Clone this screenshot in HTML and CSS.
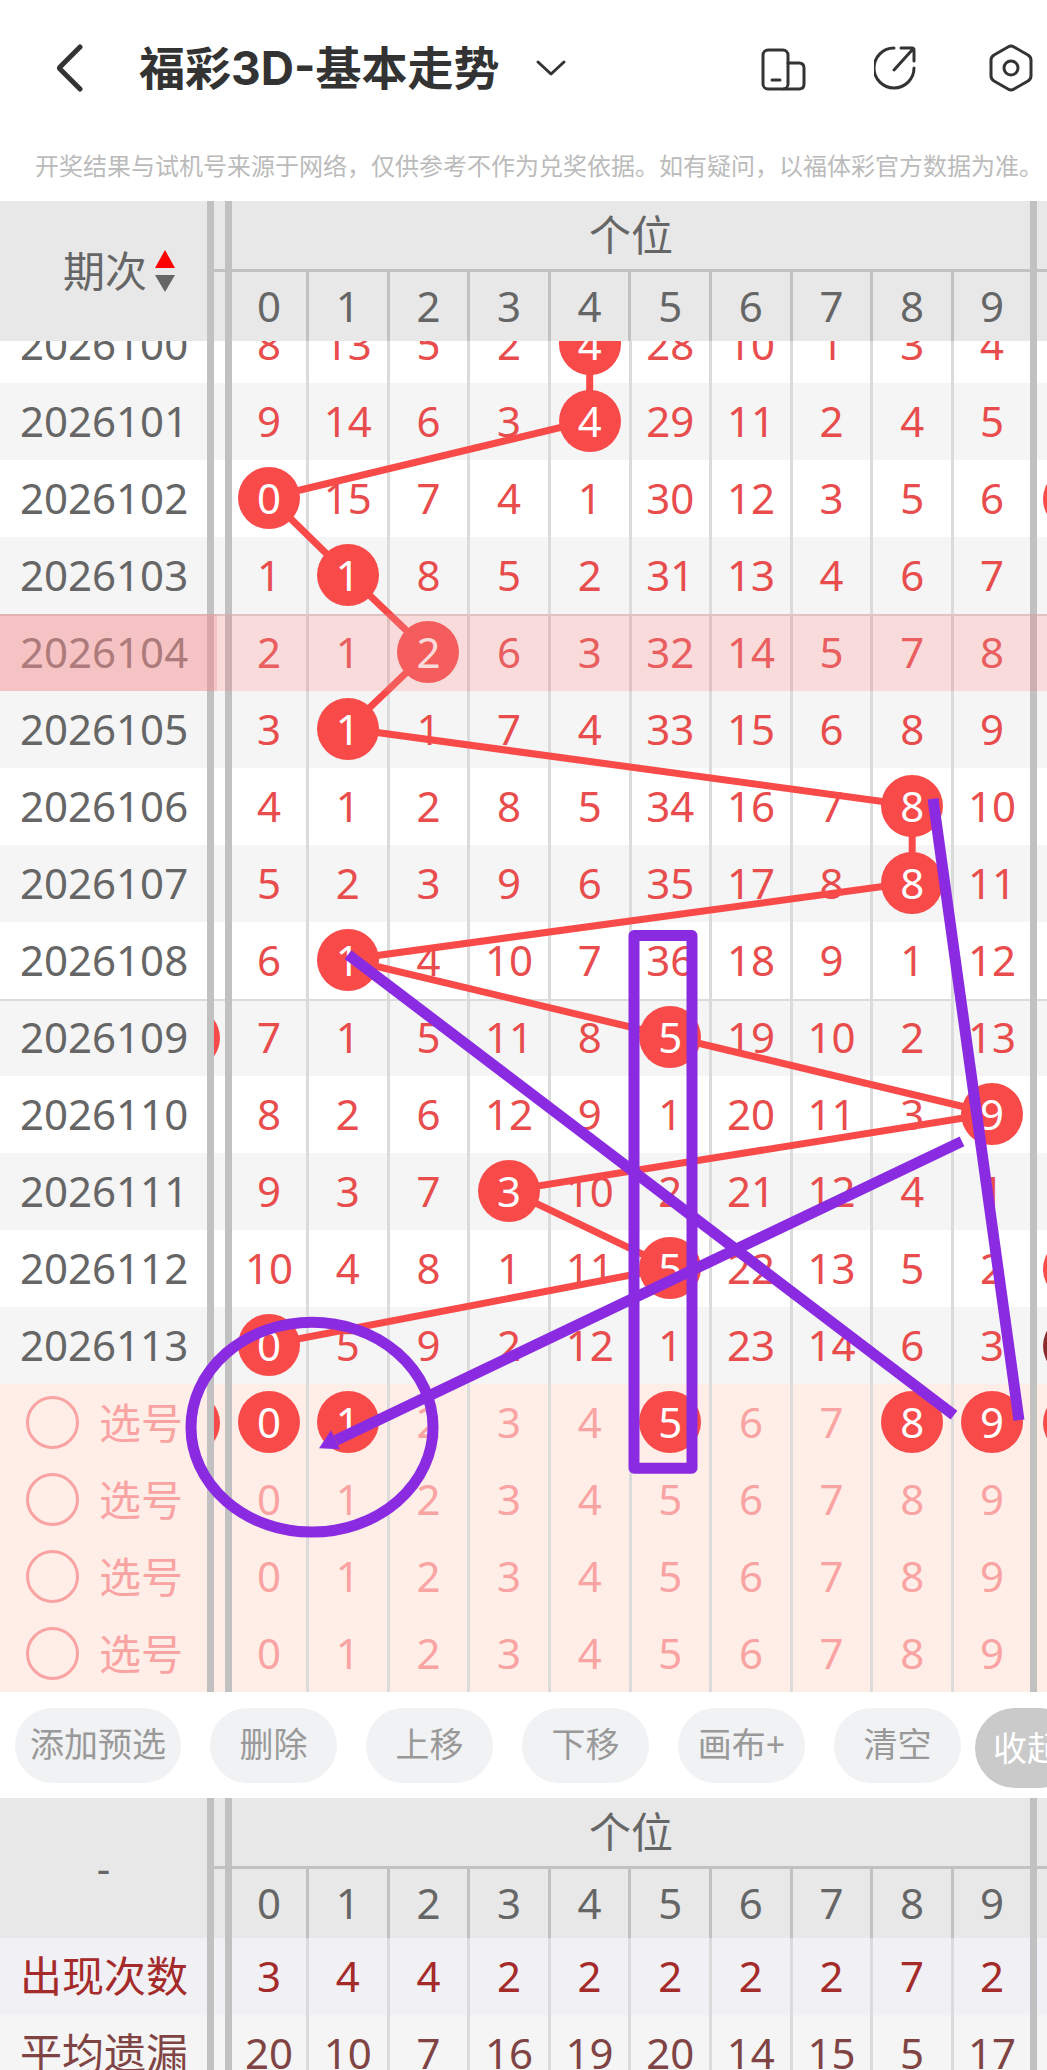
FILE: index.html
```html
<!DOCTYPE html>
<html lang="zh-CN">
<head>
    <meta charset="UTF-8">
    <meta name="viewport" content="width=device-width, initial-scale=1.0">
    <title>福彩3D-基本走势</title>
    <link rel="stylesheet" href="styles.css">
</head>
<body>
    <header class="topbar">
        <a class="back" href="#" aria-label="返回">
            <svg width="28" height="50" viewBox="0 0 28 50"><path d="M25 4 5 24Q4 25 5 26L25 46"/></svg>
        </a>
        <h1 class="title">福彩3D-基本走势</h1>
        <button class="icon-btn drop" type="button" aria-label="切换走势">
            <svg width="32" height="18" viewBox="0 0 32 18"><path d="M3 3 16 15 29 3"/></svg>
        </button>
        <div class="tools">
            <button class="icon-btn" type="button" aria-label="横竖屏">
                <svg width="46" height="46" viewBox="0 0 46 46"><rect x="3" y="5" width="25" height="39" rx="5"/><path d="M28 18H39Q44 18 44 23V39Q44 44 39 44H24M12 35H20"/></svg>
            </button>
            <button class="icon-btn" type="button" aria-label="分享">
                <svg width="46" height="46" viewBox="2 2 46 46"><path d="M22 5A20 20 0 1 0 42 25M22 27 41 6M29 5H40Q42 5 42 7V18"/></svg>
            </button>
            <button class="icon-btn" type="button" aria-label="设置">
                <svg width="46" height="48" viewBox="0 0 46 48"><path d="M20 3Q23 1 26 3L40 11Q43 13 43 16V32Q43 35 40 37L26 45Q23 47 20 45L6 37Q3 35 3 32V16Q3 13 6 11Z"/><circle cx="23" cy="24" r="7"/></svg>
            </button>
        </div>
    </header>
    <p class="notice">开奖结果与试机号来源于网络，仅供参考不作为兑奖依据。如有疑问，以福体彩官方数据为准。</p>

    <table class="grid head" id="head-table">
        <colgroup></colgroup>
        <thead>
            <tr>
                <th class="issue" rowspan="2">
                    <button class="sort" type="button">期次
                        <svg width="20" height="42" viewBox="0 0 20 42"><path class="up" d="M0 18 10 0 20 18Z"/><path class="down" d="M0 25H20L10 42Z"/></svg>
                    </button>
                </th>
                <th class="gap"></th>
                <th class="group" colspan="10">个位</th>
                <th class="more"></th>
            </tr>
            <tr class="digits"></tr>
        </thead>
    </table>

    <div class="chart" id="chart">
        <table class="grid body">
            <colgroup></colgroup>
            <tbody id="draws"></tbody>
            <tbody id="picks" class="picks"></tbody>
        </table>
        <svg class="trend"><polyline id="trend-line"/></svg>
        <svg class="canvas" viewBox="0 0 1047 1352" preserveAspectRatio="none">
            <rect x="634" y="595" width="58" height="533"/>
            <path d="M348 614 954 1075M933 458 1019 1080M962 801 336 1100"/>
            <path class="arrow" d="M319 1108 331 1090 340 1109Z"/>
            <ellipse cx="312" cy="1087" rx="121" ry="105"/>
        </svg>
    </div>

    <div class="actions">
        <button type="button">添加预选</button>
        <button type="button">删除</button>
        <button type="button">上移</button>
        <button type="button">下移</button>
        <button type="button">画布+</button>
        <button type="button">清空</button>
        <button type="button" class="fold">收起</button>
    </div>

    <table class="grid stats">
        <colgroup></colgroup>
        <thead>
            <tr>
                <th class="issue" rowspan="2">-</th>
                <th class="gap"></th>
                <th class="group" colspan="10">个位</th>
                <th class="more"></th>
            </tr>
            <tr class="digits"></tr>
        </thead>
        <tbody id="stats"></tbody>
    </table>
    <script src="app.js"></script>
</body>
</html>
```

FILE: styles.css
```css
* {
    box-sizing: border-box;
}
body {
    margin: 0;
    height: 100vh;
    overflow: hidden;
    background-color: #fff;
    color: #666;
    font-family: "Noto Sans", "Noto Sans CJK SC", sans-serif;
    font-size: 42px;
}
button {
    border: none;
    padding: 0;
    background: none;
    color: inherit;
    font: inherit;
    cursor: pointer;
}
svg {
    display: block;
}

/* top bar */
.topbar {
    display: flex;
    align-items: center;
    height: 136px;
    padding: 0 13px 0 55px;
}
.topbar svg {
    fill: none;
    stroke: #333;
    stroke-width: 3;
    stroke-linecap: round;
    stroke-linejoin: round;
}
.topbar .back svg {
    stroke-width: 5;
}
.title {
    margin: 0 36px 0 56px;
    color: #333;
    font-family: Inter, "Noto Sans CJK SC", sans-serif;
    font-size: 46px;
    line-height: 60px;
    font-weight: bold;
    white-space: nowrap;
}
.tools {
    display: flex;
    align-items: center;
    gap: 68px;
    margin-left: auto;
}
.notice {
    margin: 0;
    height: 65px;
    padding-left: 35px;
    color: #bbb;
    font-size: 24px;
    line-height: 60px;
    white-space: nowrap;
}

/* tables */
.grid {
    width: 100%;
    table-layout: fixed;
    border-collapse: separate;
    border-spacing: 0;
}
.col-issue {
    width: 214px;
}
.col-gap {
    width: 18px;
}
.col-first {
    width: 77px;
}
.col-last {
    width: 83px;
}
.col-more {
    width: 10px;
}
.grid th,
.grid td {
    height: 77px;
    padding: 0 0 2px;
    border-right: 3px solid #dbdbdb;
    font-weight: normal;
    line-height: 60px;
    text-align: center;
    white-space: nowrap;
}
.grid .issue,
.grid .gap,
.grid .last,
.grid .group {
    border-right: 7px solid #c1c1c1;
}
.grid .more {
    border-right: none;
}
.grid tbody .issue {
    padding-left: 20px;
    text-align: left;
}
.grid thead th {
    height: 69px;
    background-color: #e8e8e8;
    border-right-color: #c1c1c1;
}
.grid thead tr:first-child th {
    height: 71px;
    padding: 0;
    border-bottom: 3px solid #c1c1c1;
}
.grid thead tr:first-child .issue {
    border-bottom: none;
}
.sort {
    display: flex;
    align-items: center;
    gap: 8px;
    margin-left: 63px;
}
.sort .up {
    fill: #f00;
}
.sort .down {
    fill: #666;
}

/* trend chart */
.chart {
    position: relative;
    overflow: hidden;
}
.body {
    margin-top: -35px;
}
#draws td {
    color: #e84c4c;
}
#draws tr:nth-child(even) {
    background-color: #f5f5f5;
}
#draws .divide th,
#draws .divide td {
    box-shadow: inset 0 2px #dbdbdb;
}
.selected {
    position: relative;
}
.selected .issue::before,
.selected .issue::after {
    content: "";
    position: absolute;
    z-index: 3;
    top: 0;
    bottom: 0;
}
.selected .issue::before {
    left: 0;
    width: 217px;
    background-color: rgba(236, 142, 142, 0.53);
}
.selected .issue::after {
    left: 217px;
    right: 0;
    background-color: rgba(236, 137, 137, 0.3);
}
.ball {
    position: relative;
    z-index: 2;
    display: block;
    width: 62px;
    height: 62px;
    margin: 0 auto;
    border-radius: 50%;
    background-color: #f94a4a;
    color: #fff;
    line-height: 62px;
}
.grid .gap,
.grid .more {
    position: relative;
    overflow: hidden;
}
.edge {
    position: absolute;
    top: 8px;
    width: 62px;
    height: 62px;
    border-radius: 50%;
    background-color: #f94a4a;
}
.gap .edge {
    right: 5px;
}
.more .edge {
    left: 6px;
}
.edge.dark {
    background-color: #8b2c2c;
}
.trend,
.canvas {
    position: absolute;
    top: 0;
    left: 0;
    width: 100%;
    height: 100%;
    fill: none;
    pointer-events: none;
}
.trend {
    z-index: 1;
    stroke: #f94a4a;
    stroke-width: 7;
}
.canvas {
    z-index: 4;
    stroke: #8a2be2;
    stroke-width: 11;
    stroke-linejoin: round;
}
.canvas .arrow {
    fill: #8a2be2;
    stroke: none;
}

/* pick rows */
.picks tr {
    background-color: #ffeee8;
    color: #f9a3a3;
}
.picks label {
    display: flex;
    align-items: center;
    gap: 20px;
    padding: 2px 0 0 6px;
}
.picks input {
    appearance: none;
    width: 53px;
    height: 53px;
    margin: 0;
    border: 3px solid #f9a3a3;
    border-radius: 50%;
}
.picks button {
    width: 62px;
    height: 62px;
}

/* action buttons */
.actions {
    display: flex;
    align-items: flex-start;
    gap: 29px;
    height: 106px;
    padding: 16px 0 0 15px;
    overflow: hidden;
}
.actions button {
    flex: none;
    min-width: 127px;
    height: 75px;
    padding: 0 15px 6px;
    border-radius: 38px;
    background-color: #f1f2f4;
    color: #999;
    font-size: 34px;
}
.actions .fold {
    min-width: 0;
    height: 80px;
    margin-left: -15px;
    padding: 0 18px 4px;
    border-radius: 40px;
    background-color: #cacaca;
    color: #fff;
}

/* statistics */
#stats tr {
    background-color: #f5f5f5;
    color: #804444;
}
#stats tr:first-child {
    background-color: #f0f0f5;
    color: #a52a2a;
}
```

FILE: app.js
```js
// winning digit of each issue, starting from 2026100
const firstIssue = 2026100;
const hits = [4, 4, 0, 1, 2, 1, 8, 8, 1, 5, 9, 3, 5, 0];
const misses = [7, 12, 4, 1, 0, 27, 9, 0, 2, 3];
const selectedIssue = 2026104;

// balls of the neighbouring columns that stick out at the edges
const leftEdge = { 2026109: '' };
const rightEdge = { 2026102: '', 2026112: '', 2026113: 'dark' };

const picks = [[0, 1, 5, 8, 9], [], [], []];
const stats = [
    ['出现次数', [3, 4, 4, 2, 2, 2, 2, 2, 7, 2]],
    ['平均遗漏', [20, 10, 7, 16, 19, 20, 14, 15, 5, 17]]
];

function edge(style) {
    return style === undefined ? '' : `<span class="edge ${style}"></span>`;
}

function row(cls, label, cells, left, right) {
    let html = `<tr class="${cls}"><th class="issue" scope="row">${label}</th><td class="gap">${edge(left)}</td>`;
    cells.forEach((cell, i) => {
        html += `<td class="${i === 9 ? 'last' : ''}">${cell}</td>`;
    });
    return html + `<td class="more">${edge(right)}</td></tr>`;
}

document.querySelectorAll('colgroup').forEach(group => {
    group.innerHTML = '<col class="col-issue"><col class="col-gap"><col class="col-first">' +
        '<col>'.repeat(8) + '<col class="col-last"><col class="col-more">';
});

document.querySelectorAll('.digits').forEach(tr => {
    let html = '<th class="gap"></th>';
    for (let i = 0; i < 10; i++) {
        html += `<th class="${i === 9 ? 'last' : ''}" scope="col">${i}</th>`;
    }
    tr.innerHTML = html + '<th class="more"></th>';
});

document.getElementById('draws').innerHTML = hits.map((hit, n) => {
    const issue = firstIssue + n;
    const cells = misses.map((miss, i) => {
        misses[i] = i === hit ? 0 : miss + 1;
        return i === hit ? `<span class="ball">${i}</span>` : misses[i];
    });
    let cls = issue % 5 === 4 ? 'divide' : '';
    if (issue === selectedIssue) cls += ' selected';
    return row(cls, issue, cells, leftEdge[issue], rightEdge[issue]);
}).join('');

document.getElementById('picks').innerHTML = picks.map((picked, n) => {
    const cells = [...Array(10).keys()].map(i =>
        `<button type="button" class="${picked.includes(i) ? 'ball' : ''}">${i}</button>`);
    const label = `<label><input type="radio" name="pick">选号</label>`;
    const side = n === 0 ? '' : undefined;
    return row('', label, cells, side, side);
}).join('');

document.getElementById('stats').innerHTML = stats.map(([name, values]) => row('', name, values)).join('');

// connect the balls of consecutive issues
function drawTrend() {
    const box = document.getElementById('chart').getBoundingClientRect();
    const points = [...document.querySelectorAll('#draws .ball')].map(ball => {
        const r = ball.getBoundingClientRect();
        return `${r.left + r.width / 2 - box.left},${r.top + r.height / 2 - box.top}`;
    });
    document.getElementById('trend-line').setAttribute('points', points.join(' '));
}

drawTrend();
window.addEventListener('resize', drawTrend);
```
